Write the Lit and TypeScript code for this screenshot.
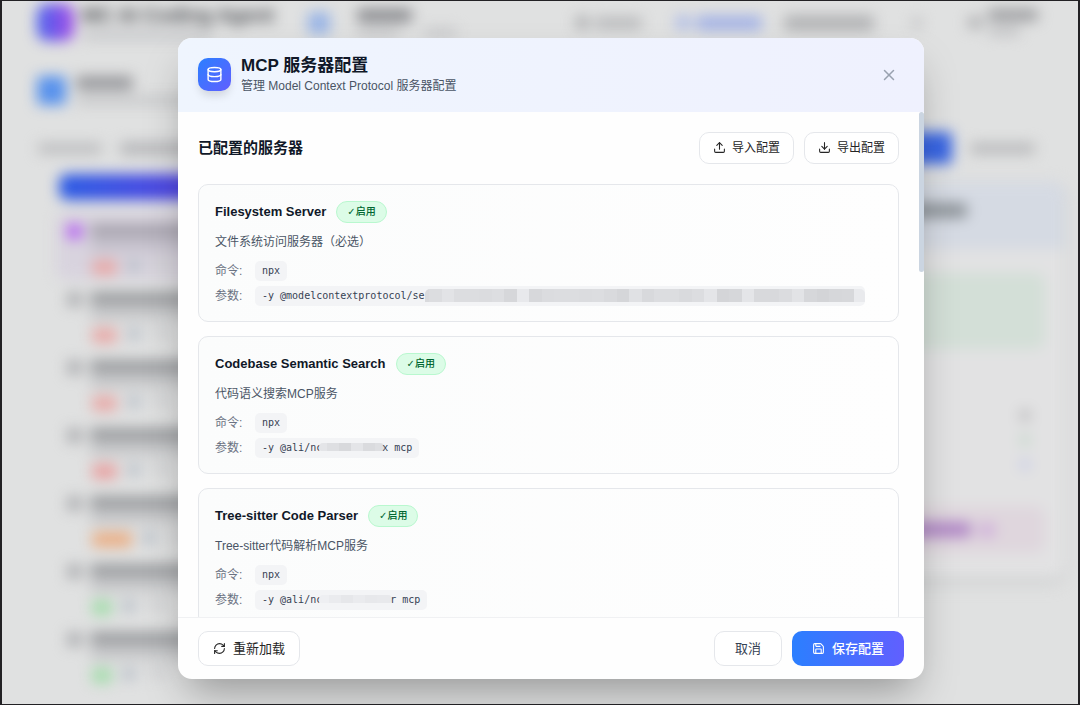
import { LitElement, html, css, svg, nothing } from "lit";
import { customElement, property } from "lit/decorators.js";
import { styleMap } from "lit/directives/style-map.js";

interface Mosaic {
  start: number;
  step: number;
  end: number;
  shades: number[];
}

interface Server {
  name: string;
  description: string;
  command: string;
  argsStart: string;
  argsEnd: string;
  tall: boolean;
  mosaic: Mosaic;
}

const SERVERS: Server[] = [
  {
    name: "Filesystem Server",
    description: "文件系统访问服务器（必选）",
    command: "npx",
    argsStart: "-y @modelcontextprotocol/se",
    argsEnd: "",
    tall: true,
    mosaic: {
      start: 4,
      step: 12.5,
      end: 440,
      shades: [
        217, 220, 226, 220, 220, 219, 221, 214, 232, 215, 219, 220, 220, 219, 220, 217, 213, 224,
        216, 220, 220, 217, 220, 228, 212, 214, 228, 216, 216, 219, 226, 214, 211, 214, 215, 233,
      ],
    },
  },
  {
    name: "Codebase Semantic Search",
    description: "代码语义搜索MCP服务",
    command: "npx",
    argsStart: "-y @ali/nc",
    argsEnd: "x mcp",
    tall: false,
    mosaic: { start: 8, step: 12, end: 65, shades: [228, 222, 216, 228, 218, 222] },
  },
  {
    name: "Tree-sitter Code Parser",
    description: "Tree-sitter代码解析MCP服务",
    command: "npx",
    argsStart: "-y @ali/nc",
    argsEnd: "r mcp",
    tall: false,
    mosaic: { start: 10, step: 12, end: 73, shades: [238, 234, 230, 234, 231, 232] },
  },
];

const mosaicFill = (m: Mosaic) => {
  const stops = m.shades.map((v, i) => {
    const from = i === 0 ? 0 : m.start + (i - 1) * m.step;
    const to = i === m.shades.length - 1 ? m.end : m.start + i * m.step;
    return `rgb(${v} ${v + 1} ${v + 4}) ${from}px ${to}px`;
  });
  return `linear-gradient(90deg, ${stops.join(", ")})`;
};

const PATHS = {
  database: svg`<ellipse cx="12" cy="5" rx="9" ry="3"/><path d="M3 5v14a9 3 0 0 0 18 0V5"/><path d="M3 12a9 3 0 0 0 18 0"/>`,
  close: svg`<path d="M18 6 6 18"/><path d="m6 6 12 12"/>`,
  upload: svg`<path d="M21 15v4a2 2 0 0 1-2 2H5a2 2 0 0 1-2-2v-4"/><path d="m17 8-5-5-5 5"/><path d="M12 3v12"/>`,
  download: svg`<path d="M21 15v4a2 2 0 0 1-2 2H5a2 2 0 0 1-2-2v-4"/><path d="m7 10 5 5 5-5"/><path d="M12 15V3"/>`,
  refresh: svg`<path d="M3 12a9 9 0 0 1 9-9 9.75 9.75 0 0 1 6.74 2.74L21 8"/><path d="M21 3v5h-5"/><path d="M21 12a9 9 0 0 1-9 9 9.75 9.75 0 0 1-6.74-2.74L3 16"/><path d="M8 16H3v5"/>`,
  save: svg`<path d="M15.2 3a2 2 0 0 1 1.4.6l3.8 3.8a2 2 0 0 1 .6 1.4V19a2 2 0 0 1-2 2H5a2 2 0 0 1-2-2V5a2 2 0 0 1 2-2z"/><path d="M17 21v-7a1 1 0 0 0-1-1H8a1 1 0 0 0-1 1v7"/><path d="M7 3v4a1 1 0 0 0 1 1h7"/>`,
};

const icon = (name: keyof typeof PATHS, size: number) => html`<svg
  width=${size}
  height=${size}
  viewBox="0 0 24 24"
  fill="none"
  stroke="currentColor"
  stroke-width="2"
  stroke-linecap="round"
  stroke-linejoin="round"
  aria-hidden="true"
>
  ${PATHS[name]}
</svg>`;

/** The application behind the dialog, out of focus. */
@customElement("workspace-backdrop")
export class WorkspaceBackdrop extends LitElement {
  static styles = css`
    :host {
      display: block;
      height: 100%;
      font-family: "Liberation Sans", "Noto Sans CJK SC", sans-serif;
      filter: blur(7px);
    }
    .bar { flex: none; border-radius: 4px; }
    .row { display: flex; align-items: center; }
    .stack { display: flex; flex-direction: column; gap: 6px; }
    .top { padding: 3px 40px 0 35px; height: 37px; }
    .logo {
      width: 37px; height: 37px; border-radius: 10px; margin-right: 8px;
      background: linear-gradient(90deg, #4763ee, #a44be6);
    }
    .brand { font-size: 20px; line-height: 20px; font-weight: 700; color: #45474c; white-space: nowrap; }
    .group { margin-left: 27px; }
    .group.first { margin-left: 34px; }
    .sub { display: flex; gap: 25px; }
    .nav { margin-left: auto; gap: 6px; }
    .project { padding: 35px 35px 0; gap: 10px; }
    .tools { padding: 27px 43px 0 36px; gap: 18px; }
    .push { margin-left: auto; }
    .main { display: flex; justify-content: space-between; padding: 10px 13px 0 54px; }
    .list { width: 300px; }
    .new { height: 26px; border-radius: 8px; margin: 0 0 12px 3px; background: linear-gradient(90deg, #2a5be4, #5140e0 45%, #7a3fe0); }
    .item { display: flex; gap: 8px; height: 56px; padding: 12px 0 0 11px; border-radius: 10px; }
    .item.active { background: #d8d3de; }
    .lines { display: flex; flex-direction: column; width: 200px; }
    .tags { display: flex; gap: 10px; margin-top: 8px; padding-left: 2px; }
    .panel { width: 360px; margin-top: 8px; height: 396px; border-radius: 12px; background: #e2e2e3; box-shadow: 0 4px 8px #c4c6c7; }
    .phead { display: flex; align-items: center; height: 67px; padding: 0 98px 10px 0; justify-content: flex-end; background: #d5dae3; box-sizing: border-box; border-radius: 12px 12px 0 0; }
    .green { height: 76px; margin: 24px 20px 0; background: #d3dfd7; border-radius: 10px; }
    .dots { display: flex; flex-direction: column; align-items: flex-end; gap: 14px; padding: 61px 35px 0 0; }
    .pink { display: flex; align-items: center; gap: 8px; justify-content: flex-end; height: 47px; margin: 36px 20px 0; padding-right: 50px; background: #dfd6dd; border-radius: 10px; }
  `;

  private bar(w: number, h: number, color: string) {
    return html`<div class="bar" style=${styleMap({ width: `${w}px`, height: `${h}px`, background: color })}></div>`;
  }

  render() {
    const tags = ["#e8a8a6", "#e8a8a6", "#e8a8a6", "#e8a0a0", "#eaae84", "#a2dcaa", "#a2dcaa"];
    return html`
      <div class="row top">
        <div class="logo"></div>
        <div class="stack"><div class="brand">MC AI Coding Agent</div>${this.bar(130, 9, "#c6c7ca")}</div>
        <div class="group first">${this.bar(22, 22, "#98b4e6")}</div>
        <div class="stack group">
          ${this.bar(55, 13, "#88898d")}
          <div class="sub">${this.bar(42, 9, "#c6c7c9")}${this.bar(33, 9, "#c6c7c9")}</div>
        </div>
        <div class="row nav">
          ${this.bar(12, 13, "#a8a9ab")}${this.bar(48, 12, "#b8b9bb")}
          ${this.bar(22, 0, "none")}${this.bar(14, 13, "#a9b8e8")}${this.bar(66, 14, "#a0b0e6")}
          ${this.bar(10, 0, "none")}${this.bar(90, 16, "#b2b3b5")}
          ${this.bar(26, 0, "none")}${this.bar(10, 12, "#c4c5c6")}
          ${this.bar(34, 0, "none")}${this.bar(14, 13, "#b0b1b3")}
          <div class="stack">${this.bar(50, 12, "#9c9da0")}${this.bar(32, 9, "#c0c1c3")}</div>
        </div>
      </div>
      <div class="row project">
        ${this.bar(29, 29, "#5892ec")}
        <div class="stack">${this.bar(57, 14, "#97989c")}${this.bar(130, 9, "#c6c7c9")}</div>
      </div>
      <div class="row tools">
        ${this.bar(64, 11, "#bcbdbf")}${this.bar(90, 13, "#b6b7ba")}
        <div class="push">${this.bar(100, 32, "#3865e2")}</div>
        ${this.bar(65, 11, "#b8b9bb")}
      </div>
      <div class="main">
        <div class="list">
          <div class="new"></div>
          ${tags.map(
            (color, i) => html`<div class="item ${i === 0 ? "active" : ""}">
              ${this.bar(15, 15, i === 0 ? "#b560f2" : "#aeafb2")}
              <div class="lines">
                ${this.bar(200, 12, i === 0 ? "#a6a2ad" : "#989a9d")}
                ${this.bar(200, 16, i === 0 ? "#c5c1cc" : "#c6c7c9")}
                <div class="tags">${this.bar(i === 4 ? 40 : i > 4 ? 20 : 25, 15, color)}${this.bar(14, 12, "#b8bfc8")}${this.bar(24, 9, "#d0d1d3")}</div>
              </div>
            </div>`
          )}
        </div>
        <div class="panel">
          <div class="phead">${this.bar(70, 15, "#8e949a")}</div>
          <div class="green"></div>
          <div class="dots">
            ${this.bar(10, 11, "#b8b8b9")}${this.bar(10, 10, "#c0d6c7")}${this.bar(10, 11, "#c8cce6")}
          </div>
          <div class="pink">${this.bar(80, 15, "#b086c6")}${this.bar(16, 14, "#d0b0da")}</div>
        </div>
      </div>
    `;
  }
}

/** One configured server with its command line. */
@customElement("server-card")
export class ServerCard extends LitElement {
  @property({ attribute: false }) server!: Server;

  static styles = css`
    :host { display: block; }
    .card {
      border: 1px solid #e5e7eb; border-radius: 10px; padding: 16px 16px 15px;
      background: linear-gradient(90deg, #fbfcfc, #fefefe);
    }
    .head { display: flex; align-items: center; gap: 10px; }
    .name { margin: 0; font-size: 13px; line-height: 22px; font-weight: 700; color: #101828; }
    .badge {
      display: flex; align-items: center; box-sizing: border-box; height: 22px; padding: 0 10px;
      border: 1px solid #b9f8cf; border-radius: 11px; background: #dcfce7;
      color: #016630; font-size: 10px; line-height: 20px; font-weight: 500;
    }
    .tick { font-family: "DejaVu Sans", sans-serif; font-weight: 700; }
    .desc { margin: 9px 0; font-size: 12px; line-height: 20px; color: #4a5565; }
    .lines { display: grid; grid-template-columns: 40px minmax(0, 1fr); row-gap: 5px; margin: 0; }
    .lines dt { font-size: 12px; line-height: 20px; color: #6a7282; }
    .lines dd { margin: 0; display: flex; }
    .code {
      display: flex; align-items: center; height: 20px; padding: 0 7px; border-radius: 5px; overflow: hidden;
      background: #f3f4f6; color: #364153; white-space: pre;
      font: 10px/20px "DejaVu Sans Mono", monospace;
    }
    .code.tall { padding-right: 0; }
    .hidden { flex: none; height: 8px; margin: 0 -2px 0 -3px; border-radius: 4px; border-bottom: 2px solid #f3f4f6; }
    .hidden.tall { height: 13px; margin: 0; border-radius: 5px 5px 0 0; border: 0; }
  `;

  render() {
    const s = this.server;
    return html`<article class="card">
      <div class="head">
        <h4 class="name">${s.name}</h4>
        <span class="badge"><span class="tick">✓</span>启用</span>
      </div>
      <p class="desc">${s.description}</p>
      <dl class="lines">
        <dt>命令:</dt>
        <dd><code class="code">${s.command}</code></dd>
        <dt>参数:</dt>
        <dd>
          <code class="code ${s.tall ? "tall" : ""}"
            >${s.argsStart}<span
              class="hidden ${s.tall ? "tall" : ""}"
              style=${styleMap({ width: `${s.mosaic.end}px`, backgroundImage: mosaicFill(s.mosaic) })}
            ></span
            >${s.argsEnd || nothing}</code
          >
        </dd>
      </dl>
    </article>`;
  }
}

@customElement("app-root")
export class AppRoot extends LitElement {
  static styles = css`
    :host {
      display: block; box-sizing: border-box; height: 100vh; padding: 1px 2px; background: #222124;
      font-family: "Liberation Sans", "Noto Sans CJK SC", sans-serif;
    }
    .stage { display: grid; height: 100%; overflow: hidden; background: #e0e1e1; }
    .under, .overlay { grid-area: 1 / 1; min-width: 0; min-height: 0; }
    .overlay { z-index: 1; display: grid; place-items: center; padding: 12px 0 0 22px; }
    .dialog {
      display: flex; flex-direction: column; width: 90%; height: 91vh;
      max-width: 746px; border-radius: 14px; overflow: hidden; background: #fefefe;
      box-shadow: 0 21px 42px -10px rgb(0 0 0 / 34%);
    }
    .header {
      display: flex; align-items: center; gap: 10px; padding: 20px; height: 34px;
      background: linear-gradient(90deg, #eff5fe, #eff1fe);
    }
    .emblem {
      display: grid; place-items: center; width: 33px; height: 33px; border-radius: 10px; color: #fff;
      background: linear-gradient(135deg, #2b7fff, #615fff); box-shadow: 0 6px 10px -2px rgb(0 0 0 / 14%);
    }
    .titles { flex: 1; }
    .title { margin: 0; font-size: 17px; line-height: 22px; font-weight: 700; color: #101828; }
    .subtitle { margin: 0; font-size: 12px; line-height: 18px; color: #4a5565; }
    button { font-family: inherit; margin: 0; cursor: pointer; }
    .close { display: grid; place-items: center; width: 30px; height: 30px; padding: 0; border: 0; background: none; color: #99a1af; }
    .body { flex: 1; min-height: 0; display: grid; grid-template-columns: minmax(0, 1fr) 5px; }
    .scroller { overflow: auto; scrollbar-width: none; padding: 20px; }
    .thumb { height: 160px; border-radius: 3px; background: #cbd5e1; }
    .toolbar { display: flex; align-items: center; gap: 10px; margin-bottom: 20px; }
    .heading { flex: 1; margin: 0; font-size: 15px; line-height: 22px; font-weight: 700; color: #101828; }
    .btn {
      display: flex; align-items: center; justify-content: center; gap: 7px; box-sizing: border-box;
      height: 35px; padding: 0 14px; border: 1px solid #e5e7eb; border-radius: 10px; background: #fff;
      color: #262626; font-size: 13px; line-height: 20px;
    }
    .btn.small { height: 32px; padding: 0 13px; font-size: 12px; gap: 6px; }
    .btn.cancel { padding: 0 20px; color: #364153; margin-left: auto; }
    .btn.save { padding: 0 20px; border: 0; color: #fff; font-weight: 500; background: linear-gradient(90deg, #2b7fff, #615fff); }
    .cards { display: grid; gap: 14px; }
    .footer { display: flex; align-items: center; gap: 10px; padding: 13px 20px; border-top: 1px solid #f0f1f3; }
  `;

  render() {
    return html`<div class="stage">
      <workspace-backdrop class="under" aria-hidden="true"></workspace-backdrop>
      <div class="overlay">
        <section class="dialog" role="dialog" aria-modal="true" aria-labelledby="title">
          <header class="header">
            <div class="emblem">${icon("database", 17)}</div>
            <div class="titles">
              <h2 class="title" id="title">MCP 服务器配置</h2>
              <p class="subtitle">管理 Model Context Protocol 服务器配置</p>
            </div>
            <button class="close" type="button" aria-label="关闭">${icon("close", 18)}</button>
          </header>
          <div class="body">
            <div class="scroller">
              <div class="toolbar">
                <h3 class="heading">已配置的服务器</h3>
                <button class="btn small" type="button">${icon("upload", 13)}导入配置</button>
                <button class="btn small" type="button">${icon("download", 13)}导出配置</button>
              </div>
              <div class="cards">
                ${SERVERS.map((s) => html`<server-card .server=${s}></server-card>`)}
              </div>
            </div>
            <div class="thumb"></div>
          </div>
          <footer class="footer">
            <button class="btn" type="button">${icon("refresh", 13)}重新加载</button>
            <button class="btn cancel" type="button">取消</button>
            <button class="btn save" type="button">${icon("save", 13)}保存配置</button>
          </footer>
        </section>
      </div>
    </div>`;
  }
}
